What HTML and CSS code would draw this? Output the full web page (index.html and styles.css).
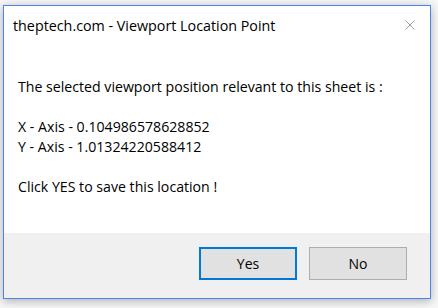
FILE: index.html
```html
<!DOCTYPE html>
<html lang="en">
<head>
    <meta charset="UTF-8">
    <meta name="viewport" content="width=device-width, initial-scale=1.0">
    <title>Viewport Location Point</title>
    <link rel="stylesheet" href="styles.css">
</head>
<body>
    <div class="ventana">
        <div class="cabecera">
            <span class="titulo">theptech.com - Viewport Location Point</span>
            <span class="cerrar">
                <svg width="10" height="10" viewBox="0 0 10 10">
                    <path d="M0.5 0.5 L9.5 9.5 M9.5 0.5 L0.5 9.5" stroke="#a0a0a0" stroke-width="1" fill="none"/>
                </svg>
            </span>
        </div>
        <div class="mensaje">
            <p>The selected viewport position relevant to this sheet is :</p>
            <p>X - Axis - 0.104986578628852<br>Y - Axis - 1.01324220588412</p>
            <p>Click YES to save this location !</p>
        </div>
        <div class="pie">
            <button class="boton activo">Yes</button>
            <button class="boton">No</button>
        </div>
    </div>
</body>
</html>
```

FILE: styles.css
```css
body {
    margin: 0;
    padding: 5px 7px 9px 3px;
    background-color: #f7f7f7;
    font-family: 'Open Sans', sans-serif;
}
.ventana {
    width: 426px;
    height: 292px;
    border: 1px solid #4a86e8;
    background-color: white;
    display: flex;
    flex-direction: column;
    box-shadow: 0 2px 9px rgba(0,0,0,0.3);
}
.cabecera {
    display: flex;
    justify-content: space-between;
    align-items: center;
    padding: 8px 15px 0 9px;
    height: 22px;
}
.titulo {
    font-size: 14.3px;
    color: #000;
}
.cerrar {
    display: flex;
}
.mensaje {
    flex: 1;
    padding: 0 14px;
    font-size: 14.15px;
    line-height: 20px;
    color: #000;
}
.mensaje p {
    margin: 20px 0 0 0;
}
.mensaje p:first-child {
    margin-top: 41px;
}
.pie {
    height: 65px;
    background-color: #f0f0f0;
    display: flex;
    justify-content: flex-end;
    align-items: flex-start;
    gap: 12px;
    padding: 0 23px 0 0;
    box-sizing: border-box;
    padding-top: 14px;
}
.boton {
    width: 98px;
    height: 33px;
    font-family: 'Open Sans', sans-serif;
    font-size: 14px;
    color: #000;
    background-color: #e1e1e1;
    border: 1px solid #adadad;
    margin: 0;
}
.boton.activo {
    border: 2px solid #0078d7;
}
```
